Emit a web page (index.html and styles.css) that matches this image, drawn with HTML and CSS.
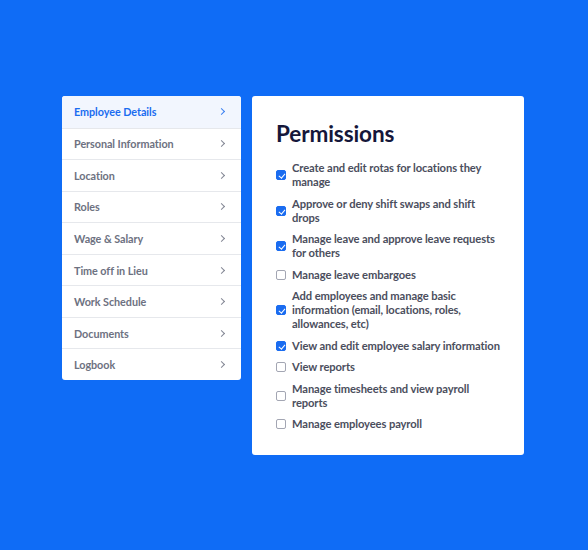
FILE: index.html
```html
<!DOCTYPE html>
<html lang="en">
<head>
  <meta charset="UTF-8">
  <title>Employee Permissions</title>
  <link rel="stylesheet" href="styles.css">
</head>
<body>

<div class="screen">
  <ul class="side-nav">
    <li class="nav-item active">Employee Details <span class="chev"></span></li>
    <li class="nav-item">Personal Information <span class="chev"></span></li>
    <li class="nav-item">Location <span class="chev"></span></li>
    <li class="nav-item">Roles <span class="chev"></span></li>
    <li class="nav-item">Wage &amp; Salary <span class="chev"></span></li>
    <li class="nav-item">Time off in Lieu <span class="chev"></span></li>
    <li class="nav-item">Work Schedule <span class="chev"></span></li>
    <li class="nav-item">Documents <span class="chev"></span></li>
    <li class="nav-item">Logbook <span class="chev"></span></li>
  </ul>

  <div class="perm-card">
    <h2 class="perm-title">Permissions</h2>
    <ul class="perm-list">
      <li class="perm"><span class="box on"></span><span class="perm-text">Create and edit rotas for locations they manage</span></li>
      <li class="perm"><span class="box on"></span><span class="perm-text">Approve or deny shift swaps and shift drops</span></li>
      <li class="perm"><span class="box on"></span><span class="perm-text">Manage leave and approve leave requests for others</span></li>
      <li class="perm"><span class="box"></span><span class="perm-text">Manage leave embargoes</span></li>
      <li class="perm"><span class="box on"></span><span class="perm-text">Add employees and manage basic information (email, locations, roles, allowances, etc)</span></li>
      <li class="perm"><span class="box on"></span><span class="perm-text">View and edit employee salary information</span></li>
      <li class="perm"><span class="box"></span><span class="perm-text">View reports</span></li>
      <li class="perm"><span class="box"></span><span class="perm-text">Manage timesheets and view payroll reports</span></li>
      <li class="perm"><span class="box"></span><span class="perm-text">Manage employees payroll</span></li>
    </ul>
  </div>
</div>

</body>
</html>
```

FILE: styles.css
```css
html, body {
  margin: 0;
  height: 100%;
}
body {
  background-color: #0f6cf6;
  font-family: Lato, "Noto Sans", sans-serif;
}
.screen {
  display: flex;
  align-items: flex-start;
  gap: 11px;
  padding: 96px 0 0 62px;
}

/* left menu */
.side-nav {
  list-style: none;
  margin: 0;
  padding: 0;
  width: 179px;
  background: #fff;
  border-radius: 3px;
  overflow: hidden;
}
.nav-item {
  display: flex;
  align-items: center;
  justify-content: space-between;
  box-sizing: border-box;
  height: 31.55px;
  padding: 0 16px 0 12px;
  border-top: 1px solid #e6e8ec;
  font-size: 10.8px;
  letter-spacing: -0.05px;
  font-weight: 700;
  color: #6d7181;
}
.nav-item:first-child {
  border-top: 0;
}
.nav-item.active {
  background: #f2f6fe;
  color: #1a6cf0;
}
.chev {
  width: 4px;
  height: 4px;
  border-top: 1.5px solid currentColor;
  border-right: 1.5px solid currentColor;
  transform: rotate(45deg);
  margin-right: 1px;
  opacity: 0.85;
}

/* permissions */
.perm-card {
  width: 272px;
  box-sizing: border-box;
  background: #fff;
  border-radius: 3px;
  padding: 24px 24px 24px 24px;
}
.perm-title {
  margin: 0 0 13px 0;
  font-size: 22.5px;
  letter-spacing: -0.1px;
  font-weight: 700;
  color: #15173a;
  line-height: 28px;
}
.perm-list {
  list-style: none;
  margin: 0;
  padding: 0;
  display: flex;
  flex-direction: column;
  gap: 7.5px;
}
.perm {
  display: flex;
  align-items: center;
  gap: 6px;
}
.perm-text {
  font-size: 11.2px;
  letter-spacing: -0.1px;
  line-height: 14px;
  font-weight: 700;
  color: #4b4e5d;
}
.box {
  flex: none;
  width: 10px;
  height: 10px;
  box-sizing: border-box;
  border: 1px solid #a3a6b3;
  border-radius: 2px;
  position: relative;
}
.box.on {
  background: #1a6cf0;
  border-color: #1a6cf0;
}
.box.on::after {
  content: "";
  position: absolute;
  left: 2.5px;
  top: 1px;
  width: 2.5px;
  height: 5px;
  border-right: 1.5px solid #fff;
  border-bottom: 1.5px solid #fff;
  transform: rotate(40deg);
}
```
